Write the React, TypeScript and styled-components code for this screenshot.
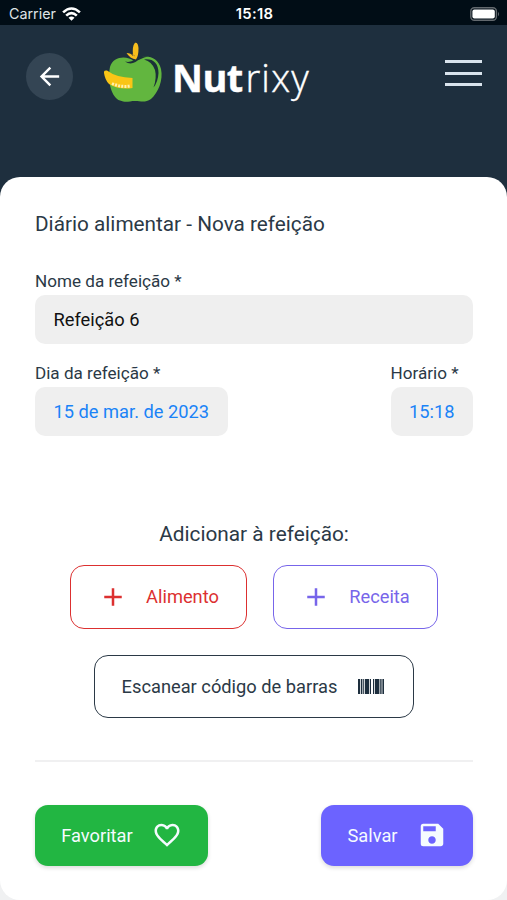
import React from 'react';
import styled, { createGlobalStyle } from 'styled-components';
import { MdAdd, MdArrowBack, MdFavoriteBorder, MdSave } from 'react-icons/md';

const GlobalStyle = createGlobalStyle`
  * { box-sizing: border-box; }
  body { margin: 0; background: #f0f1f2; font-family: Roboto, sans-serif; color: #2b3946; }
  button { font-family: inherit; }
`;

const Screen = styled.div`
  width: 507px;
  height: 900px;
  overflow: hidden;
  display: flex;
  flex-direction: column;
  background: linear-gradient(#1e2f3e 0 240px, #f0f1f2 240px);
`;

const StatusBar = styled.div`
  height: 25px;
  flex: none;
  display: grid;
  grid-template-columns: 1fr auto 1fr;
  align-items: center;
  padding: 2px 7px 0 9px;
  background: #010d16;
  color: #fff;
  font-family: Inter, sans-serif;
  font-size: 14.3px;
`;

const Carrier = styled.div`
  display: flex;
  align-items: center;
  gap: 6px;
  color: #dfe3e6;
`;

const Clock = styled.div`
  font-weight: 600;
  font-size: 14.8px;
  letter-spacing: 0.3px;
`;

const Battery = styled.svg`
  justify-self: end;
`;

const Header = styled.header`
  height: 152px;
  flex: none;
  display: flex;
  align-items: flex-start;
  padding: 17px 25px 0 26px;
`;

const BackButton = styled.button`
  width: 47px;
  height: 47px;
  margin-top: 11px;
  padding: 0;
  border: 0;
  border-radius: 50%;
  display: grid;
  place-items: center;
  background: #344554;
  color: #fff;
`;

const Brand = styled.div`
  display: flex;
  margin-left: 31px;
  color: #fff;
`;

const BrandName = styled.div`
  margin: 10px 0 0 8px;
  font-family: "Open Sans", sans-serif;
  font-size: 38px;
  line-height: 50px;
  font-weight: 350;
  letter-spacing: 1.2px;
  -webkit-text-stroke: 0.4px #fff;
`;

const BrandStrong = styled.span`
  font-weight: 750;
  letter-spacing: -0.5px;
  margin-right: 2.5px;
`;

const MenuButton = styled.button`
  width: 37px;
  height: 26px;
  margin: 18px 0 0 auto;
  padding: 0;
  border: 0;
  background: none;
  display: flex;
  flex-direction: column;
  justify-content: space-between;
`;

const MenuLine = styled.span`
  height: 3px;
  width: 37px;
  background: #d9e3ec;
`;

const Card = styled.main`
  flex: 1;
  display: flex;
  flex-direction: column;
  padding: 31px 34px 0 35px;
  background: #fff;
  border-radius: 20px;
`;

const Title = styled.h1`
  margin: 0;
  font-size: 20.75px;
  line-height: 32px;
  font-weight: 400;
`;

const Field = styled.div`
  display: flex;
  flex-direction: column;
`;

const FieldRow = styled.div`
  display: flex;
  justify-content: space-between;
  margin-top: 19px;
`;

const Label = styled.label`
  font-size: 17.1px;
  line-height: 20px;
  margin-bottom: 4px;
`;

const Value = styled.div<{ $picker?: boolean }>`
  height: 49px;
  padding: 0 18.5px;
  border-radius: 10px;
  background: #efefef;
  color: ${(p) => (p.$picker ? '#1a83f7' : '#111')};
  font-size: 18.27px;
  line-height: 49px;
  white-space: nowrap;
`;

const NameField = styled(Field)`
  margin-top: 31px;
`;

const Subtitle = styled.h2`
  margin: 82px 0 0;
  text-align: center;
  font-size: 20.8px;
  line-height: 32px;
  font-weight: 400;
`;

const AddRow = styled.div`
  display: flex;
  justify-content: center;
  gap: 26px;
  margin-top: 15px;
`;

const OutlineButton = styled.button<{ $color: string; $width: number }>`
  width: ${(p) => p.$width}px;
  height: 64px;
  padding: 0 0 1px;
  display: flex;
  align-items: center;
  justify-content: center;
  gap: 18px;
  border: 1.5px solid ${(p) => p.$color};
  border-radius: 14px;
  background: #fff;
  color: ${(p) => p.$color};
  font-size: 18.27px;
`;

const ScanButton = styled(OutlineButton)`
  align-self: center;
  height: 63px;
  margin-top: 26px;
  padding-right: 2px;
  gap: 21px;
`;

const Divider = styled.hr`
  width: 100%;
  height: 2px;
  margin: 42px 0 0;
  border: 0;
  background: #f0f0f1;
`;

const Actions = styled.div`
  display: flex;
  justify-content: space-between;
  margin-top: 43px;
`;

const ActionButton = styled.button<{ $color: string; $width: number }>`
  width: ${(p) => p.$width}px;
  height: 61px;
  padding: 0 0 1px;
  display: flex;
  align-items: center;
  justify-content: center;
  gap: 19px;
  border: 0;
  border-radius: 13px;
  background: ${(p) => p.$color};
  box-shadow: 0 2px 4px rgba(0, 0, 0, 0.14);
  color: #f5fbff;
  font-size: 18.27px;
`;

const Wifi = () => (
  <svg width="19" height="14" viewBox="0 0 19 14" fill="none" stroke="#fff" strokeWidth="2.6">
    <path d="M1.1 5.4Q9.5-2.4 17.9 5.4" />
    <path d="M4.2 8.6Q9.5 3.6 14.8 8.6" />
    <path d="M9.5 13.8 6.5 10.8Q9.5 8.3 12.5 10.8Z" fill="#fff" stroke="none" />
  </svg>
);

const BatteryIcon = () => (
  <Battery width="30" height="14" viewBox="0 0 30 14">
    <rect x=".8" y=".8" width="25.6" height="12.4" rx="3.5" fill="none" stroke="#63696e" strokeWidth="1.4" />
    <rect x="2.4" y="2.4" width="22.4" height="9.2" rx="2" fill="#fff" />
    <path d="M28 4.7q2 2.3 0 4.6z" fill="#63696e" />
  </Battery>
);

const AppleLogo = () => (
  <svg width="60" height="62" viewBox="0 0 60 62">
    <path d="M30 19C23 13.5 9 14 6 25C3 40 8 56 16 58.5C22 61 25 59 31 59C37 59 41 61 47 57C54 51 59.5 38 57 27C54 14 40 11.5 32 18Z" fill="#62b63f" />
    <path d="M21 19.5Q26 21 31 17.5Q37 13 44 14.5Q36 16.5 31.5 20Q26 23 21 19.5Z" fill="#1b3038" />
    <path d="M40 17.5Q54 16 54.500 31Q54 40 49.500 45.500Q53 36 51 28Q48 19.500 40 17.500Z" fill="#1b3038" />
    <path d="M0 31Q-.5 28 3 28.5Q12 35.500 28.500 36L28.500 46Q15 48 5 42Q1 38 0 31Z" fill="#fac516" />
    <path d="M8 41.500Q17 45.500 26 44" fill="none" stroke="#fff1b0" strokeWidth="3" strokeDasharray="2 1.200" />
    <path d="M32 17.500Q26 16.500 22.500 11Q27 11 29 14Q28 4 31 .8Q34 0 34.500 6Q34.600 14 32 17.500Z" fill="#f6bd1d" />
    <path d="M31 14Q29 13 28 12" fill="none" stroke="#ab7e21" strokeWidth=".7" />
  </svg>
);

const Barcode = () => (
  <svg width="26" height="15" viewBox="0 0 26 15" fill="#1e2f3e">
    <path d="M0 0h2.2v15H0zM3 0h1.4v15H3zM5.200 0h1v15h-1zM7 0h4v15H7zM11.800 0h1.200v15h-1.200zM15 0h1.200v15H15zM17 0h4.400v15H17zM22.200 0h1.400v15h-1.400zM24.400 0h1.600v15h-1.600z" />
  </svg>
);

export default function App() {
  return (
    <>
      <GlobalStyle />
      <Screen>
        <StatusBar>
          <Carrier>Carrier<Wifi /></Carrier>
          <Clock>15:18</Clock>
          <BatteryIcon />
        </StatusBar>
        <Header>
          <BackButton aria-label="Voltar"><MdArrowBack size={29} /></BackButton>
          <Brand>
            <AppleLogo />
            <BrandName><BrandStrong>Nut</BrandStrong>rixy</BrandName>
          </Brand>
          <MenuButton aria-label="Menu"><MenuLine /><MenuLine /><MenuLine /></MenuButton>
        </Header>
        <Card>
          <Title>Diário alimentar - Nova refeição</Title>
          <NameField>
            <Label>Nome da refeição *</Label>
            <Value>Refeição 6</Value>
          </NameField>
          <FieldRow>
            <Field>
              <Label>Dia da refeição *</Label>
              <Value $picker>15 de mar. de 2023</Value>
            </Field>
            <Field>
              <Label>Horário *</Label>
              <Value $picker>15:18</Value>
            </Field>
          </FieldRow>
          <Subtitle>Adicionar à refeição:</Subtitle>
          <AddRow>
            <OutlineButton $color="#dc3030" $width={177}><MdAdd size={30} />Alimento</OutlineButton>
            <OutlineButton $color="#7765ea" $width={165}><MdAdd size={30} />Receita</OutlineButton>
          </AddRow>
          <ScanButton $color="#2b3946" $width={320}>Escanear código de barras<Barcode /></ScanButton>
          <Divider />
          <Actions>
            <ActionButton $color="#22b642" $width={173}>Favoritar<MdFavoriteBorder size={30} /></ActionButton>
            <ActionButton $color="#6c63ff" $width={152}>Salvar<MdSave size={30} /></ActionButton>
          </Actions>
        </Card>
      </Screen>
    </>
  );
}
